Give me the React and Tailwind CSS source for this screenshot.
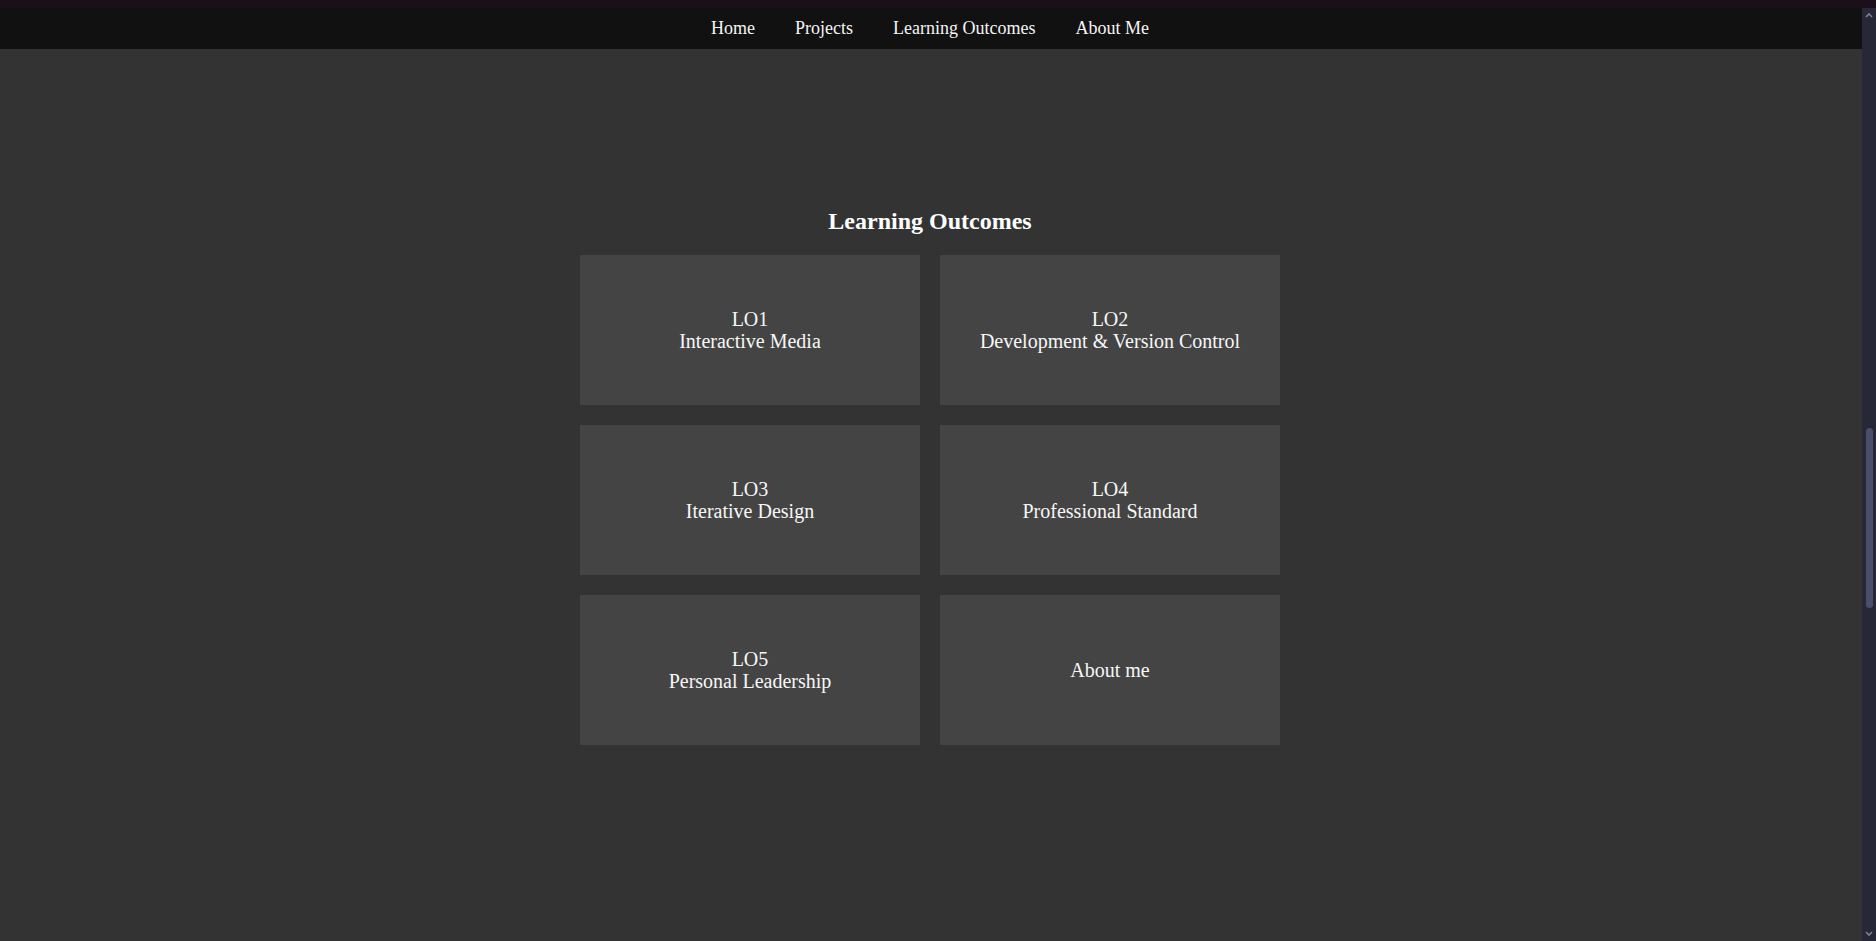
import React from "react";

const serif = { fontFamily: '"Liberation Serif", "Times New Roman", serif' };

const cards = [
  ["LO1", "Interactive Media"],
  ["LO2", "Development & Version Control"],
  ["LO3", "Iterative Design"],
  ["LO4", "Professional Standard"],
  ["LO5", "Personal Leadership"],
  [null, "About me"],
];

export default function App() {
  return (
    <div className="w-full h-[941px] flex flex-col overflow-hidden bg-[#333333] text-white" style={serif}>
      <div className="h-[8px] w-full bg-[#1b0f1a] shrink-0" />
      <div className="flex flex-1 min-h-0">
        <div className="flex-1 flex flex-col bg-[#333333]">
          <nav className="h-[41px] bg-[#111111] flex items-center justify-center gap-[40px] pr-[2px] text-[18px] leading-[21px] text-[#f5f5f5]">
            <a>Home</a>
            <a>Projects</a>
            <a>Learning Outcomes</a>
            <a>About Me</a>
          </nav>
          <main className="pt-[158px] pr-[2px] flex flex-col items-center">
            <h2 className="text-[24px] leading-[28px] font-bold mb-[20px] text-white">Learning Outcomes</h2>
            <div className="grid grid-cols-[340px_340px] gap-[20px]">
              {cards.map(([a, b], i) => (
                <div key={i} className="h-[150px] bg-[#444444] flex flex-col items-center justify-center text-[20px] leading-[22.5px] text-[#f7f7f7]">
                  {a && <span>{a}</span>}
                  <span>{b}</span>
                </div>
              ))}
            </div>
          </main>
        </div>
        <div className="w-[14px] shrink-0 bg-[#262838] flex flex-col items-center justify-between py-[3px]">
          <svg width="10" height="8" viewBox="0 0 10 8">
            <path d="M2 6 L5 3 L8 6" stroke="#7d7f92" strokeWidth="1.6" fill="none" />
          </svg>
          <div className="flex-1 w-full flex flex-col items-center pt-[409px]">
            <div className="w-[7px] h-[180px] rounded-full bg-[#4b4e6b]" />
          </div>
          <svg width="10" height="8" viewBox="0 0 10 8">
            <path d="M2 2 L5 5 L8 2" stroke="#7d7f92" strokeWidth="1.6" fill="none" />
          </svg>
        </div>
      </div>
    </div>
  );
}
